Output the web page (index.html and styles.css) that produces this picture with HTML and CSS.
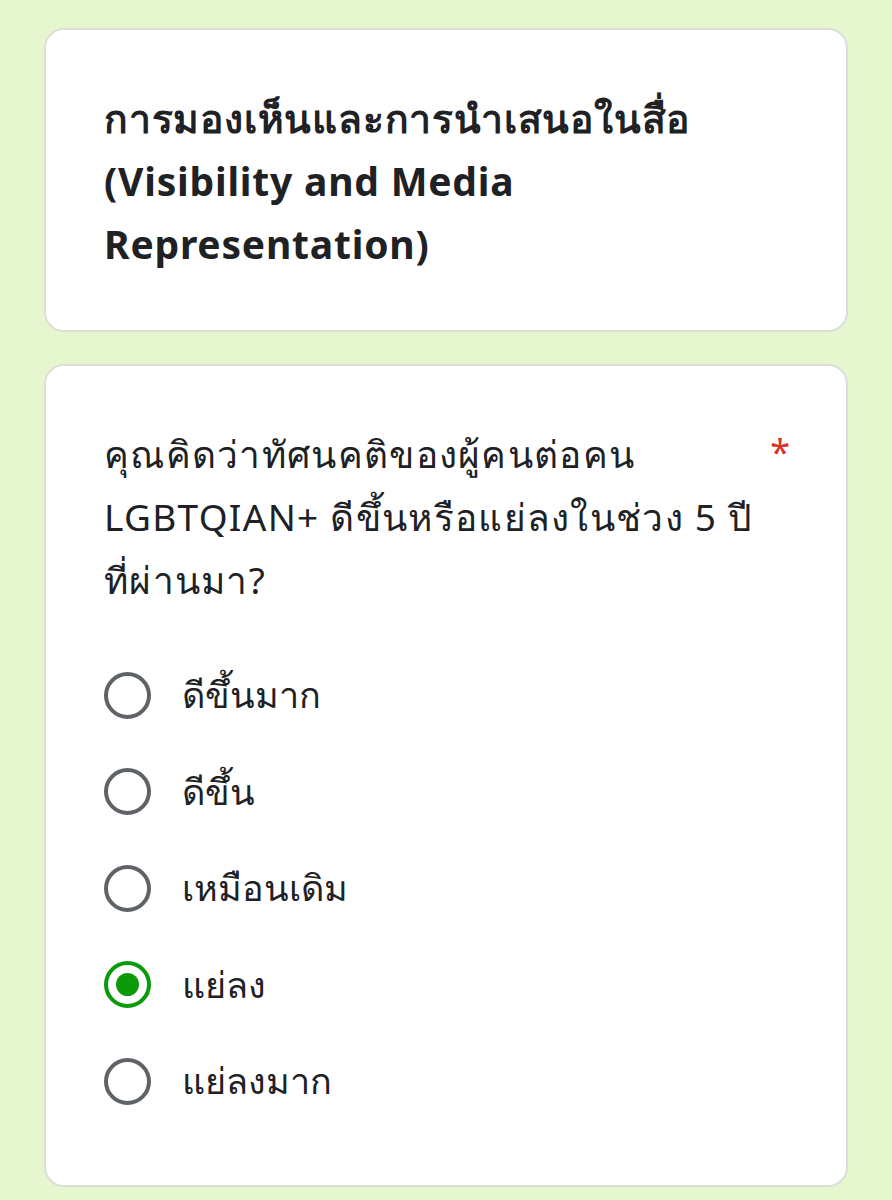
FILE: index.html
```html
<!DOCTYPE html>
<html lang="th">
<head>
<meta charset="utf-8">
<link rel="stylesheet" href="styles.css">
</head>
<body>
<div class="page">
  <section class="card header-card">
    <h1 class="title">การมองเห็นและการนำเสนอในสื่อ (Visibility and Media Representation)</h1>
  </section>
  <section class="card question-card">
    <div class="question">
      <div class="question-text">คุณคิดว่าทัศนคติของผู้คนต่อคน LGBTQIAN+ ดีขึ้นหรือแย่ลงในช่วง 5 ปี ที่ผ่านมา?</div>
      <span class="required">*</span>
    </div>
    <div class="options">
      <div class="option"><span class="radio"></span><span class="label">ดีขึ้นมาก</span></div>
      <div class="option"><span class="radio"></span><span class="label">ดีขึ้น</span></div>
      <div class="option"><span class="radio"></span><span class="label">เหมือนเดิม</span></div>
      <div class="option"><span class="radio checked"></span><span class="label">แย่ลง</span></div>
      <div class="option"><span class="radio"></span><span class="label">แย่ลงมาก</span></div>
    </div>
  </section>
</div>
</body>
</html>
```

FILE: styles.css
```css
html, body {
  margin: 0;
  padding: 0;
  background: #e6f7cf;
}
body {
  font-family: "Noto Sans", "Liberation Sans", sans-serif;
  color: #202124;
}
.page {
  padding: 28px 44px 0 44px;
  display: flex;
  flex-direction: column;
  gap: 32px;
}
.card {
  background: #ffffff;
  border: 2px solid #dcdfd8;
  border-radius: 20px;
  box-sizing: border-box;
}
.header-card {
  height: 304px;
  padding: 56px 58px 0 58px;
}
.title {
  margin: 0;
  font-size: 39px;
  font-weight: 700;
  line-height: 63px;
  letter-spacing: 0.8px;
  width: 660px;
}
.question-card {
  height: 823px;
  padding: 56px 58px 0 58px;
}
.question {
  display: flex;
  justify-content: space-between;
  align-items: flex-start;
}
.question-text {
  font-size: 37px;
  line-height: 63px;
  letter-spacing: 1.3px;
  width: 660px;
}
.required {
  color: #d93025;
  font-size: 36px;
  line-height: 40px;
  margin-right: -2px;
  margin-top: 10px;
}
.options {
  margin-top: 36px;
  display: flex;
  flex-direction: column;
}
.option {
  display: flex;
  align-items: center;
  height: 96.5px;
}
.radio {
  width: 47px;
  height: 47px;
  border: 4px solid #5f6368;
  border-radius: 50%;
  box-sizing: border-box;
  margin-right: 31px;
  position: relative;
  flex: none;
}
.radio.checked {
  border-color: #0a9a0a;
}
.radio.checked::after {
  content: "";
  position: absolute;
  left: 50%;
  top: 50%;
  width: 23px;
  height: 23px;
  margin: -11.5px 0 0 -11.5px;
  border-radius: 50%;
  background: #0a9a0a;
}
.label {
  font-size: 36px;
  line-height: 48px;
}
```
